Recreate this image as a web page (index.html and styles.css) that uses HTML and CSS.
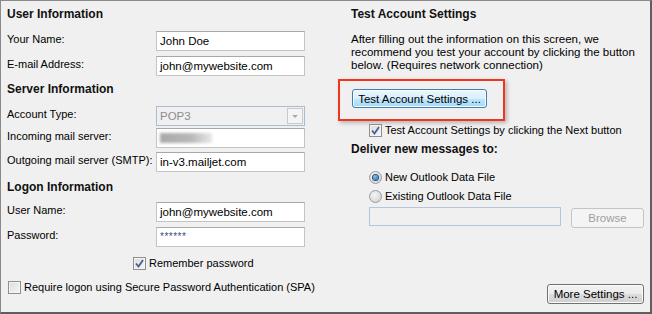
FILE: index.html
```html
<!DOCTYPE html>
<html lang="en">
<head>
    <meta charset="UTF-8">
    <title>Add Account - POP and IMAP Account Settings</title>
    <link rel="stylesheet" href="styles.css">
</head>
<body>
    <div class="dialog">
        <div class="col-left">
            <div class="section-title">User Information</div>
            <div class="row">
                <label>Your Name:</label>
                <div class="field">John Doe</div>
            </div>
            <div class="row gap-5">
                <label>E-mail Address:</label>
                <div class="field">john@mywebsite.com</div>
            </div>

            <div class="section-title">Server Information</div>
            <div class="row">
                <label>Account Type:</label>
                <div class="field select">
                    <span>POP3</span>
                    <span class="select-arrow"></span>
                </div>
            </div>
            <div class="row gap-2">
                <label>Incoming mail server:</label>
                <div class="field"><span class="blurred"></span></div>
            </div>
            <div class="row gap-4">
                <label>Outgoing mail server (SMTP):</label>
                <div class="field">in-v3.mailjet.com</div>
            </div>

            <div class="section-title logon">Logon Information</div>
            <div class="row">
                <label>User Name:</label>
                <div class="field">john@mywebsite.com</div>
            </div>
            <div class="row gap-5">
                <label>Password:</label>
                <div class="field password">******</div>
            </div>
            <div class="check-row remember">
                <span class="checkbox">
                    <svg width="9" height="9" viewBox="0 0 9 9"><path d="M1 4.5 L3.5 7.5 L8 1" fill="none" stroke="#4a5f97" stroke-width="1.8"/></svg>
                </span>
                Remember password
            </div>
            <div class="check-row spa">
                <span class="checkbox"></span>
                Require logon using Secure Password Authentication (SPA)
            </div>
        </div>

        <div class="col-right">
            <div class="section-title">Test Account Settings</div>
            <p class="note">After filling out the information on this screen, we recommend you test your account by clicking the button below. (Requires network connection)</p>
            <div class="highlight">
                <button class="btn btn-blue">Test Account Settings ...</button>
            </div>
            <div class="check-row indent next-check">
                <span class="checkbox">
                    <svg width="9" height="9" viewBox="0 0 9 9"><path d="M1 4.5 L3.5 7.5 L8 1" fill="none" stroke="#4a5f97" stroke-width="1.8"/></svg>
                </span>
                Test Account Settings by clicking the Next button
            </div>
            <div class="section-title deliver">Deliver new messages to:</div>
            <div class="check-row indent radio-row first">
                <span class="radio checked"></span>
                New Outlook Data File
            </div>
            <div class="check-row indent radio-row">
                <span class="radio"></span>
                Existing Outlook Data File
            </div>
            <div class="browse-row">
                <div class="field disabled"></div>
                <button class="btn btn-disabled">Browse</button>
            </div>
            <div class="bottom-row">
                <button class="btn">More Settings ...</button>
            </div>
        </div>
    </div>
</body>
</html>
```

FILE: styles.css
```css
html, body {
    margin: 0;
    padding: 0;
}
body {
    font-family: "Liberation Sans", Arial, sans-serif;
    font-size: 11px;
    color: #000;
    background: #f0f0f0;
}
.dialog {
    box-sizing: border-box;
    width: 652px;
    height: 314px;
    border-top: 1px solid #8a8a8a;
    border-left: 1px solid #8a8a8a;
    border-right: 2px solid #5e5e5e;
    border-bottom: 2px solid #5e5e5e;
    background: #f0f0f0;
    display: grid;
    grid-template-columns: 298px 1fr;
    column-gap: 46px;
    padding: 4px 6px 0 6px;
}
.section-title {
    font-size: 12px;
    font-weight: bold;
    line-height: 18px;
    height: 18px;
    color: #111;
    white-space: nowrap;
}
.col-left .section-title {
    margin-top: 4px;
    margin-bottom: 8px;
}
.col-left .section-title:first-child {
    margin-top: 0;
}
.col-left .section-title.logon {
    margin-top: 6px;
    margin-bottom: 6px;
}
.row {
    display: flex;
    align-items: center;
    height: 20px;
}
.row label {
    width: 149px;
    flex: none;
    margin-top: -5px;
    white-space: nowrap;
}
.gap-2 { margin-top: 2px; }
.gap-4 { margin-top: 4px; }
.gap-5 { margin-top: 5px; }
.field {
    box-sizing: border-box;
    width: 149px;
    height: 20px;
    border: 1px solid #c4c4c4;
    border-top-color: #a8a8a8;
    background: #fff;
    padding: 0 3px;
    line-height: 18px;
    font-size: 11.5px;
    white-space: nowrap;
    overflow: hidden;
}
.field.select {
    display: flex;
    justify-content: space-between;
    align-items: center;
    background: #f0f0f0;
    border: 1px solid #a9bcd4;
    color: #8d8d8d;
    padding-right: 1px;
}
.select-arrow {
    box-sizing: border-box;
    width: 16px;
    height: 16px;
    border: 1px solid #c9c9c9;
    background: #f4f4f4;
    position: relative;
}
.select-arrow::after {
    content: "";
    position: absolute;
    left: 4px;
    top: 6px;
    border-left: 3px solid transparent;
    border-right: 3px solid transparent;
    border-top: 3px solid #a9a9a9;
}
.blurred {
    display: inline-block;
    width: 52px;
    height: 10px;
    margin-top: 4px;
    background: linear-gradient(90deg, #a8a8a8 0%, #b8b8b8 60%, #e8e8e8 100%);
    filter: blur(1.5px);
    vertical-align: top;
}
.password {
    color: #3a4f80;
    font-size: 10px;
    letter-spacing: 0.5px;
}
.check-row {
    display: flex;
    align-items: center;
    height: 14px;
    white-space: nowrap;
}
.checkbox, .radio {
    box-sizing: border-box;
    flex: none;
    width: 13px;
    height: 13px;
    margin-right: 3px;
    display: inline-flex;
    align-items: center;
    justify-content: center;
}
.checkbox {
    border: 1px solid #8e8f8f;
    background: linear-gradient(135deg, #dcdcdc, #f6f6f6);
    box-shadow: inset 0 0 0 1px #f4f4f4;
}
.radio {
    border-radius: 50%;
    border: 1px solid #9a9a9a;
    background: radial-gradient(circle at 40% 35%, #f4f4f4, #cfcfcf);
}
.radio.checked::after {
    content: "";
    width: 5px;
    height: 5px;
    border-radius: 50%;
    background: radial-gradient(circle at 40% 35%, #7ec4f0, #1c5fa8);
    box-shadow: 0 0 0 1px #2a4f7a;
}
.remember {
    margin-top: 9px;
    padding-left: 126px;
}
.spa {
    margin-top: 10px;
    padding-left: 1px;
}
.note {
    margin: 10px 0 0 0;
    line-height: 13px;
    font-size: 11.5px;
    width: 290px;
}
.highlight {
    box-sizing: border-box;
    width: 167px;
    height: 42px;
    margin: 7px 0 0 -13px;
    border: 2px solid #f0361c;
    box-shadow: 2px 2px 4px rgba(0, 0, 0, 0.25);
    padding: 8px 0 0 12px;
}
.btn {
    box-sizing: border-box;
    font-family: inherit;
    font-size: 11.5px;
    color: #000;
    height: 20px;
    padding: 0;
    white-space: nowrap;
    border: 1px solid #707070;
    border-radius: 3px;
    background: linear-gradient(#f2f2f2 0%, #ebebeb 50%, #dddddd 51%, #cfcfcf 100%);
    box-shadow: inset 0 0 0 1px #fbfbfb;
}
.btn-blue {
    width: 135px;
    height: 19px;
    border-color: #3c7fb1;
    background: linear-gradient(#eaf6fd 0%, #d9f0fc 50%, #bee6fd 51%, #a7d9f5 100%);
}
.btn-disabled {
    width: 73px;
    color: #a0a0a0;
    border-color: #c5c5c5;
    background: #f4f4f4;
    box-shadow: none;
}
.indent {
    padding-left: 18px;
}
.next-check {
    margin-top: 2px;
}
.deliver {
    margin-top: 3px;
}
.radio-row.first {
    margin-top: 12px;
}
.radio-row {
    margin-top: 5px;
}
.browse-row {
    display: flex;
    align-items: flex-start;
    gap: 10px;
    margin: 4px 0 0 18px;
}
.field.disabled {
    width: 192px;
    height: 19px;
    background: #f0f0f0;
    border: 1px solid #b5c6d8;
}
.browse-row .btn {
    margin-top: 1px;
}
.bottom-row {
    display: flex;
    justify-content: flex-end;
    margin-top: 56px;
}
.bottom-row .btn {
    width: 97px;
}
```
